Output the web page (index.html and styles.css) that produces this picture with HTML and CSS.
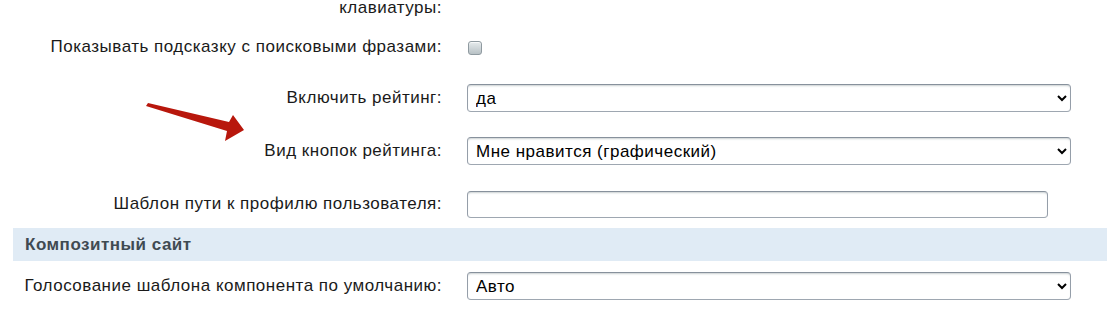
FILE: index.html
```html
<!DOCTYPE html>
<html lang="ru">
<head>
    <meta charset="UTF-8">
    <title>Настройки модуля</title>
    <link rel="stylesheet" href="styles.css">
</head>
<body>
    <div class="settings">
        <!-- tail of the previous option, label wrapped onto two lines -->
        <div class="row row-top">
            <div class="label">клавиатуры:</div>
            <div></div>
        </div>

        <div class="row row-check">
            <div class="label">Показывать подсказку с поисковыми фразами:</div>
            <div><input type="checkbox" class="check"></div>
        </div>

        <div class="row">
            <div class="label">Включить рейтинг:</div>
            <div>
                <select class="field">
                    <option>да</option>
                    <option>нет</option>
                </select>
            </div>
        </div>

        <div class="row">
            <div class="label">Вид кнопок рейтинга:</div>
            <div>
                <select class="field">
                    <option>Мне нравится (графический)</option>
                    <option>Мне нравится (текстовый)</option>
                </select>
            </div>
        </div>

        <div class="row row-last">
            <div class="label">Шаблон пути к профилю пользователя:</div>
            <div><input type="text" class="field text-field"></div>
        </div>

        <!-- section heading -->
        <div class="section">Композитный сайт</div>

        <div class="row row-after">
            <div class="label">Голосование шаблона компонента по умолчанию:</div>
            <div>
                <select class="field">
                    <option>Авто</option>
                </select>
            </div>
        </div>

        <!-- red pointer drawn over the page -->
        <svg class="pointer" width="110" height="45" viewBox="0 0 110 45">
            <path d="M1 4 L3 1 L84 20 L88 13 L99 28 L80 39 L82 29 Z" fill="#b8170c"/>
        </svg>
    </div>
</body>
</html>
```

FILE: styles.css
```css
/* page */
body {
    margin: 0;
    background-color: #fff;
    font-family: "Liberation Sans", Arial, sans-serif;
    font-size: 17px;
    letter-spacing: 0.5px;
    color: #1a1a1a;
}

.settings {
    position: relative;
    padding-left: 13px;
}

/* one option: label on the left, control on the right */
.row {
    display: grid;
    grid-template-columns: 429px 1fr;
    column-gap: 25px;
    align-items: center;
    padding: 12px 0 13px;
}

.row-top {
    padding: 0;
    line-height: 16px;
}

.row-check {
    padding: 17px 0 11px;
}

.row-last {
    padding-bottom: 10px;
}

.row-after {
    padding-top: 11px;
}

.label {
    text-align: right;
    line-height: 28px;
    white-space: nowrap;
}

.row-top .label {
    line-height: 16px;
}

/* selects and text inputs */
.field {
    box-sizing: border-box;
    width: 604px;
    height: 28px;
    padding: 0 4px;
    border: 1px solid;
    border-color: #87919c #959ea9 #9ea7b1 #959ea9;
    border-radius: 4px;
    background-color: #fff;
    box-shadow: 0 1px 0 0 rgba(255, 255, 255, 0.3), inset 0 2px 2px -1px rgba(180, 188, 191, 0.7);
    font-family: "Liberation Sans", Arial, sans-serif;
    font-size: 17px;
    letter-spacing: 0.5px;
    color: #000;
    vertical-align: middle;
}

.text-field {
    width: 581px;
    height: 27px;
}

/* checkbox in the admin grey style */
.check {
    -webkit-appearance: none;
    appearance: none;
    box-sizing: border-box;
    width: 14px;
    height: 14px;
    margin: 0 0 0 1px;
    border: 1px solid #8f9aa0;
    border-radius: 3px;
    background: linear-gradient(to bottom, #e6ebed, #b8c1c5);
    box-shadow: inset 0 1px 0 #f6f8f9;
    vertical-align: middle;
}

/* section heading band */
.section {
    height: 33px;
    line-height: 33px;
    padding-left: 12px;
    background-color: #e0ebf5;
    font-weight: bold;
    color: #3f4a52;
}

/* the red arrow lies over the content */
.pointer {
    position: absolute;
    left: 145px;
    top: 102px;
}
```
